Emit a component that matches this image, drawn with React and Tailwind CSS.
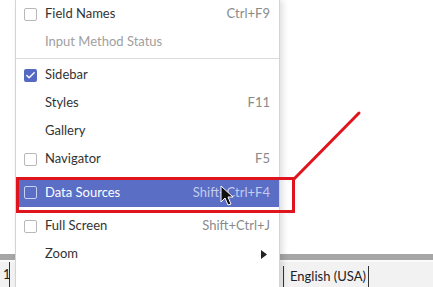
import { Check } from "lucide-react";

const font = { fontFamily: "Lato, 'Open Sans', sans-serif" };

const Box = ({ checked, active }) =>
  checked ? (
    <span className="w-[13px] h-[13px] rounded-[2px] bg-[#5468c4] flex items-center justify-center">
      <Check size={11} strokeWidth={3} color="#fff" />
    </span>
  ) : (
    <span
      className={`w-[13px] h-[13px] rounded-[2px] border ${
        active ? "border-[#c9d0f0]" : "border-[#b8b8b8] bg-white"
      }`}
    />
  );

const Item = ({ label, shortcut, box, checked, disabled, active, arrow, h = "h-[28px]" }) => (
  <div
    className={`${h} flex items-center pl-[8px] pr-[9px] text-[13px] ${
      active ? "bg-[#5a6ec6] text-white" : disabled ? "text-[#a0a0a0]" : "text-[#333]"
    }`}
  >
    <span className="w-[21px] flex items-center">
      {box && <Box checked={checked} active={active} />}
    </span>
    <span className="flex-1">{label}</span>
    {shortcut && (
      <span className={active ? "text-[#c3cbee]" : "text-[#8a8a8a]"}>{shortcut}</span>
    )}
    {arrow && (
      <svg width="6" height="9" viewBox="0 0 6 9" className="mr-[3px]">
        <path d="M0 0 L6 4.5 L0 9 Z" fill="#222" />
      </svg>
    )}
  </div>
);

export default function App() {
  return (
    <div className="relative w-[433px] h-[287px] overflow-hidden bg-white" style={font}>
      <div className="flex flex-col h-full">
        <div className="flex-1" />
        <div className="h-[6px] bg-[#a6a6a6]" />
        <div className="h-[2px] bg-[#fafafa]" />
        <div className="h-[25px] bg-[#f2f2f2] flex items-stretch text-[13px] text-[#222]">
          <div className="w-[10px] pl-[3px] border-r border-[#333] flex items-center">1</div>
          <div className="w-[273px]" />
          <div className="border-l border-r border-[#333] mt-[4px] pl-[6px] w-[86px] flex items-center whitespace-nowrap">
            English (USA)
          </div>
        </div>
      </div>

      <div className="absolute left-[15px] top-0 w-[265px] h-[300px] bg-white border-l border-r border-[#d4d4d4] shadow-[3px_0_6px_rgba(0,0,0,0.12)] flex flex-col">
        <Item label="Field Names" shortcut="Ctrl+F9" box />
        <Item label="Input Method Status" disabled />
        <div className="h-[5px] flex items-center">
          <div className="w-full h-px bg-[#dcdcdc]" />
        </div>
        <Item label="Sidebar" box checked />
        <Item label="Styles" shortcut="F11" />
        <Item label="Gallery" />
        <Item label="Navigator" shortcut="F5" box />
        <div className="h-[5px]" />
        <Item label="Data Sources" shortcut="Shift+Ctrl+F4" box active h="h-[29px]" />
        <div className="h-[5px]" />
        <Item label="Full Screen" shortcut="Shift+Ctrl+J" box />
        <Item label="Zoom" arrow />
      </div>

      <svg className="absolute left-0 top-0" width="433" height="287">
        <rect x="17.5" y="178.5" width="276" height="33" fill="none" stroke="#e0141c" strokeWidth="3" />
        <line x1="294" y1="179" x2="359" y2="113" stroke="#e0141c" strokeWidth="3" strokeLinecap="round" />
        <path
          d="M221 186 L221 202 L225 198 L228 205 L231 204 L228 197 L233 197 Z"
          fill="#111"
          stroke="#fff"
          strokeWidth="1"
        />
      </svg>
    </div>
  );
}
